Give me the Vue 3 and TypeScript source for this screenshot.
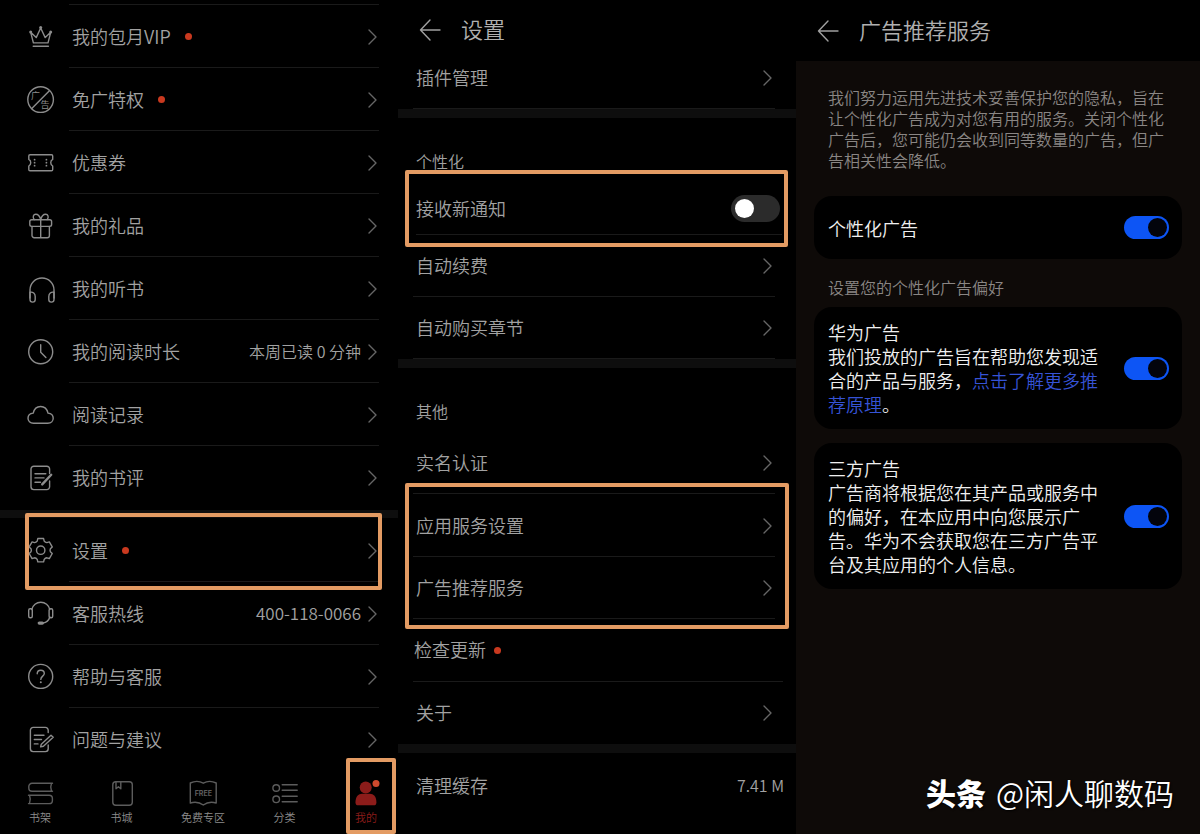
<script setup lang="ts">
import { ref } from 'vue'

interface MenuItem {
  label: string
  icon: string
  dot?: boolean
  value?: string
  phone?: boolean
  framed?: boolean
}

interface SettingItem {
  label: string
  dot?: boolean
  arrow?: boolean
  framed?: boolean
}

const mainMenu: MenuItem[] = [
  { label: '我的包月VIP', icon: 'crown', dot: true },
  { label: '免广特权', icon: 'adfree', dot: true },
  { label: '优惠券', icon: 'ticket' },
  { label: '我的礼品', icon: 'gift' },
  { label: '我的听书', icon: 'headphones' },
  { label: '我的阅读时长', icon: 'clock', value: '本周已读 0 分钟' },
  { label: '阅读记录', icon: 'cloud' },
  { label: '我的书评', icon: 'review' },
]

const serviceMenu: MenuItem[] = [
  { label: '设置', icon: 'gear', dot: true, framed: true },
  { label: '客服热线', icon: 'headset', value: '400-118-0066', phone: true },
  { label: '帮助与客服', icon: 'help' },
  { label: '问题与建议', icon: 'feedback' },
]

const menus = [mainMenu, serviceMenu]

const tabs = [
  { label: '书架', icon: 'shelf' },
  { label: '书城', icon: 'store' },
  { label: '免费专区', icon: 'free' },
  { label: '分类', icon: 'category' },
  { label: '我的', icon: 'me' },
]

const otherSettings: SettingItem[] = [
  { label: '实名认证', arrow: true },
  { label: '应用服务设置', arrow: true, framed: true },
  { label: '广告推荐服务', arrow: true },
  { label: '检查更新', dot: true },
  { label: '关于', arrow: true },
]

const notify = ref(false)
const personalAds = ref(true)
const huaweiAds = ref(true)
const thirdPartyAds = ref(true)

function gearPath(cx: number, cy: number): string {
  const parts: string[] = []
  const at = (deg: number, r: number) => {
    const a = (deg * Math.PI) / 180
    return `${(cx + r * Math.cos(a)).toFixed(2)} ${(cy + r * Math.sin(a)).toFixed(2)}`
  }
  for (let i = 0; i < 6; i++) {
    const c = i * 60 - 90
    parts.push(`${i === 0 ? 'M' : 'L'}${at(c - 21, 9.8)}`)
    parts.push(`L${at(c - 14, 12)}`)
    parts.push(`L${at(c + 14, 12)}`)
    parts.push(`L${at(c + 21, 9.8)}`)
    parts.push(`Q${at(c + 30, 9)} ${at(c + 39, 9.8)}`)
  }
  return parts.join('') + 'Z'
}
const gear = gearPath(13.7, 13.2)
</script>

<template>
  <main class="page">
    <section class="panel mine">
      <ul v-for="(menu, m) in menus" :key="m" class="menu">
        <li v-for="item in menu" :key="item.label" class="menu-item">
          <button type="button" class="menu-row">
            <svg class="icon" viewBox="0 0 28 28" aria-hidden="true">
              <template v-if="item.icon === 'crown'">
                <path d="M3.7 9.3L6.4 19.9H21L23.7 9.3L18.2 14.6L13.7 5L9.2 14.6Z" />
                <path d="M6.2 23.3H21.4" />
                <g class="solid">
                  <circle cx="3.7" cy="9" r="1.5" />
                  <circle cx="13.7" cy="4.6" r="1.5" />
                  <circle cx="23.7" cy="9" r="1.5" />
                </g>
              </template>
              <template v-else-if="item.icon === 'adfree'">
                <circle cx="13.6" cy="13.6" r="12.8" />
                <path d="M22.4 4.8L4.8 22.4" />
                <text x="4" y="13">广</text>
                <text x="13.5" y="21.5">告</text>
              </template>
              <template v-else-if="item.icon === 'ticket'">
                <path d="M3 5.7H24.5a1.2 1.2 0 0 1 1.2 1.2V10.4c-2.6 1.4-2.6 5.2 0 6.6V20.5a1.2 1.2 0 0 1-1.2 1.2H3a1.2 1.2 0 0 1-1.2-1.2V17c2.6-1.4 2.6-5.2 0-6.6V6.9A1.2 1.2 0 0 1 3 5.7Z" />
                <g class="solid">
                  <circle v-for="y in [10.7, 13.7, 16.7]" :key="y" cx="7.6" :cy="y" r="0.9" />
                  <circle v-for="y in [10.7, 13.7, 16.7]" :key="y" cx="19.4" :cy="y" r="0.9" />
                </g>
              </template>
              <template v-else-if="item.icon === 'gift'">
                <rect x="2.8" y="7.8" width="21.8" height="6.6" rx="1.8" />
                <path d="M5 14.4V23.5a2.2 2.2 0 0 0 2.2 2.2H20.2a2.2 2.2 0 0 0 2.2-2.2V14.4M13.7 7.8V25.7" />
                <path d="M13.7 7.6C12.7 3.8 10.8 2.2 8.8 2.2C6.4 2.2 5.2 5.2 7.3 7.6M13.7 7.6C14.7 3.8 16.6 2.2 18.6 2.2C21 2.2 22.2 5.2 20.1 7.6" />
              </template>
              <template v-else-if="item.icon === 'headphones'">
                <path d="M3 23V15A12 12 0 0 1 27 15V23" />
                <path d="M3 17.2C6 16.6 8.2 18.6 8.2 21.6V24.5A2.6 2.6 0 0 1 3 24.5ZM27 17.2C24 16.6 21.8 18.6 21.8 21.6V24.5A2.6 2.6 0 0 0 27 24.5Z" />
              </template>
              <template v-else-if="item.icon === 'clock'">
                <circle cx="13.7" cy="13.8" r="12" />
                <path d="M13.7 6.7V14.3L18.9 19.5" />
              </template>
              <template v-else-if="item.icon === 'cloud'">
                <path d="M6.5 22.2C3 22.2 1 19.9 1 17.2C1 14.3 3 12.4 6.2 12.1C7.2 7.7 10 5.5 13.6 5.5S20 7.7 21 12.1C24.2 12.4 26.2 14.3 26.2 17.2C26.2 19.9 24.2 22.2 20.7 22.2Z" />
              </template>
              <template v-else-if="item.icon === 'review'">
                <path d="M22.6 9.5V5A2.8 2.8 0 0 0 19.8 2.2H6.8A2.8 2.8 0 0 0 4 5V22.8A2.8 2.8 0 0 0 6.8 25.6H19.8A2.8 2.8 0 0 0 22.6 22.8V17" />
                <path d="M8 9.7H18.8M8 13.9H17M8 18.2H13.5" />
                <path class="thick" d="M24.2 10.8L15.2 20.4" />
              </template>
              <template v-else-if="item.icon === 'gear'">
                <path :d="gear" />
                <circle cx="13.7" cy="13.2" r="4.2" />
              </template>
              <template v-else-if="item.icon === 'headset'">
                <path d="M4.8 9.5A9.2 9.2 0 0 1 22.8 9.5M22.8 17C21.8 20.5 19.5 22.5 16 23" />
                <rect x="1.7" y="8.7" width="3.6" height="9" rx="1.5" />
                <rect x="22.1" y="8.7" width="3.6" height="9" rx="1.5" />
                <rect class="solid" x="10.6" y="21.4" width="6.4" height="3.4" rx="1.7" />
              </template>
              <template v-else-if="item.icon === 'help'">
                <circle cx="13.7" cy="13.4" r="12" />
                <path d="M10.2 10.8C10.2 8.6 11.7 7.2 13.8 7.2S17.3 8.6 17.3 10.6C17.3 13.1 13.8 13.3 13.8 16.4" />
                <circle class="solid" cx="13.8" cy="19.3" r="1" />
              </template>
              <template v-else>
                <path d="M21.2 6.5V4.2A2.8 2.8 0 0 0 18.4 1.4H6.2A2.8 2.8 0 0 0 3.4 4.2V22.8A2.8 2.8 0 0 0 6.2 25.6H18.4A2.8 2.8 0 0 0 21.2 22.8V19" />
                <path d="M7.3 9.2H17M7.3 13.5H14.5M7.3 17.9H11" />
                <path d="M24 9.2L26.2 11.3L16.4 20.3L13.6 20.9L14.3 18.2Z" />
              </template>
            </svg>
            <span class="menu-body">
              <span class="label">{{ item.label }}</span>
              <span v-if="item.dot" class="dot"></span>
              <span v-if="item.value" class="value" :class="{ phone: item.phone }">{{ item.value }}</span>
              <svg class="chevron" viewBox="0 0 10 16" aria-hidden="true"><path d="M1 1L8 8L1 15" /></svg>
            </span>
          </button>
          <span v-if="item.framed" class="frame frame-settings"></span>
        </li>
      </ul>

      <nav class="tabs">
        <button v-for="tab in tabs" :key="tab.label" type="button" class="tab" :class="{ active: tab.icon === 'me' }">
          <svg class="tab-icon" viewBox="0 0 28 26" aria-hidden="true">
            <template v-if="tab.icon === 'shelf'">
              <path d="M26.5 3.2H6A3.2 3.2 0 0 0 2.8 6.4V8A3.2 3.2 0 0 0 6 11.2H26.5M25.5 3.2C24.4 6 24.4 8.5 25.5 11.2" />
              <path d="M2.5 15.2H23.2A3.2 3.2 0 0 1 26.4 18.4V20.4A3.2 3.2 0 0 1 23.2 23.6H2.5M3.5 15.2C4.6 18 4.6 20.8 3.5 23.6" />
            </template>
            <template v-else-if="tab.icon === 'store'">
              <rect x="4.8" y="1.7" width="19.5" height="23.6" rx="3" />
              <path d="M8 1.7V8.7L10.4 6.7L12.8 8.7V1.7" />
            </template>
            <template v-else-if="tab.icon === 'free'">
              <path d="M1.3 3C5.5 1 10.5 1 14.3 3.2C18.1 1 23 1 27.2 3V23C23 21.8 18.1 22.2 14.3 25C10.5 22.2 5.5 21.8 1.3 23Z" />
              <text x="14.3" y="15.5">FREE</text>
            </template>
            <template v-else-if="tab.icon === 'category'">
              <circle cx="5.2" cy="8" r="3.3" />
              <circle cx="5.2" cy="19.3" r="3.3" />
              <path d="M11.2 4.7H26.2M11.2 10.3H26.2M11.2 16.3H26.2M11.2 21.7H26.2" />
            </template>
            <template v-else>
              <circle class="person" cx="13.7" cy="7.4" r="6" />
              <path class="person" d="M3.5 22.5C3.5 16.5 6.5 13.8 10 13.8H17.8C21.5 13.8 24.4 16.5 24.4 22.5C24.4 24.5 23.4 25.3 21.8 25.3H6.1C4.5 25.3 3.5 24.5 3.5 22.5Z" />
              <circle class="badge" cx="24" cy="3.4" r="3.5" />
            </template>
          </svg>
          <span>{{ tab.label }}</span>
          <span v-if="tab.icon === 'me'" class="frame frame-tab"></span>
        </button>
      </nav>
    </section>

    <section class="panel settings">
      <header class="bar">
        <button type="button" class="back" aria-label="返回">
          <svg viewBox="0 0 22 22" aria-hidden="true"><path d="M11 1L1.5 11L11 21M1.5 11H21" /></svg>
        </button>
        <h1>设置</h1>
      </header>
      <button type="button" class="set-row first">
        <span class="label">插件管理</span>
        <svg class="chevron" viewBox="0 0 10 16" aria-hidden="true"><path d="M1 1L8 8L1 15" /></svg>
      </button>

      <div class="group">
        <h2>个性化</h2>
        <div class="set-row notify">
          <label class="label" for="notify">接收新通知</label>
          <input id="notify" v-model="notify" type="checkbox" role="switch" class="switch-off" />
          <span class="frame frame-notify"></span>
        </div>
        <button v-for="name in ['自动续费', '自动购买章节']" :key="name" type="button" class="set-row">
          <span class="label">{{ name }}</span>
          <svg class="chevron" viewBox="0 0 10 16" aria-hidden="true"><path d="M1 1L8 8L1 15" /></svg>
        </button>
      </div>

      <div class="group">
        <h2>其他</h2>
        <ul class="rows">
          <li v-for="item in otherSettings" :key="item.label">
            <button type="button" class="set-row" :class="{ wide: item.dot }">
              <span class="label">{{ item.label }}</span>
              <span v-if="item.dot" class="dot"></span>
              <svg v-if="item.arrow" class="chevron" viewBox="0 0 10 16" aria-hidden="true"><path d="M1 1L8 8L1 15" /></svg>
            </button>
            <span v-if="item.framed" class="frame frame-services"></span>
          </li>
        </ul>
      </div>

      <div class="group">
        <button type="button" class="set-row cache">
          <span class="label">清理缓存</span>
          <span class="value">7.41 M</span>
        </button>
      </div>
    </section>

    <section class="panel ads">
      <header class="bar">
        <button type="button" class="back" aria-label="返回">
          <svg viewBox="0 0 22 22" aria-hidden="true"><path d="M11 1L1.5 11L11 21M1.5 11H21" /></svg>
        </button>
        <h1>广告推荐服务</h1>
      </header>
      <p class="note">我们努力运用先进技术妥善保护您的隐私，旨在让个性化广告成为对您有用的服务。关闭个性化广告后，您可能仍会收到同等数量的广告，但广告相关性会降低。</p>
      <div class="card">
        <label class="card-text" for="personal">个性化广告</label>
        <input id="personal" v-model="personalAds" type="checkbox" role="switch" class="switch" />
      </div>
      <p class="caption">设置您的个性化广告偏好</p>
      <div class="card">
        <div class="card-text">
          <label for="huawei">华为广告</label>
          <p>我们投放的广告旨在帮助您发现适合的产品与服务，<a href="#">点击了解更多推荐原理</a>。</p>
        </div>
        <input id="huawei" v-model="huaweiAds" type="checkbox" role="switch" class="switch" />
      </div>
      <div class="card">
        <div class="card-text">
          <label for="third">三方广告</label>
          <p>广告商将根据您在其产品或服务中的偏好，在本应用中向您展示广告。华为不会获取您在三方广告平台及其应用的个人信息。</p>
        </div>
        <input id="third" v-model="thirdPartyAds" type="checkbox" role="switch" class="switch" />
      </div>
      <p class="credit"><b>头条</b><span>@闲人聊数码</span></p>
    </section>
  </main>
</template>

<style>
body {
  margin: 0;
  background: #000;
}
</style>

<style scoped>
.page {
  display: grid;
  grid-template-columns: 398fr 398fr 404fr;
  min-height: 100vh;
  background: #000;
  color: #a2a2a2;
  font-family: "Noto Sans CJK SC", sans-serif;
  font-size: 18px;
  font-weight: 350;
  line-height: 24px;
}

.panel {
  min-width: 0;
  position: relative;
}

ul {
  list-style: none;
  margin: 0;
  padding: 0;
}

h1,
h2,
p {
  margin: 0;
  font-weight: inherit;
}

button {
  display: flex;
  align-items: center;
  box-sizing: border-box;
  width: 100%;
  margin: 0;
  padding: 0;
  border: 0;
  background: none;
  color: inherit;
  font: inherit;
  text-align: left;
  cursor: pointer;
}

svg {
  flex: none;
  overflow: visible;
  fill: none;
  stroke: #8c8c8c;
  stroke-width: 1.4;
  stroke-linecap: round;
  stroke-linejoin: round;
}

.frame {
  position: absolute;
  box-sizing: border-box;
  border: 4px solid #e39b63;
  border-radius: 2px;
  pointer-events: none;
}

.label,
.value {
  padding-bottom: 2px;
}

.dot {
  flex: none;
  width: 7px;
  height: 7px;
  margin-left: 14px;
  border-radius: 50%;
  background: #c9391f;
}

.value {
  margin-left: auto;
  font-size: 16px;
}

.chevron {
  width: 10px;
  height: 16px;
  margin-left: auto;
  stroke: #666;
}

.value + .chevron {
  margin-left: 7px;
}

/* Profile menu */
.mine {
  display: flex;
  flex-direction: column;
}

.menu:first-child::before {
  content: "";
  display: block;
  height: 4px;
  margin: 0 19px 0 69px;
  border-bottom: 1px solid #1a1a1a;
}

.menu + .menu {
  margin-top: 1px;
  padding-top: 9px;
  background: linear-gradient(#0e0e0e, #0e0e0e) top / 100% 8px no-repeat;
}

.menu-item {
  position: relative;
}

.menu-row {
  height: 63px;
  padding: 0 19px 0 27px;
}

.icon {
  width: 28px;
  height: 28px;
  margin: 1px 14px 0 0;
}

.icon text {
  fill: #8c8c8c;
  stroke: none;
  font-size: 9px;
  font-weight: 400;
}

.icon .solid {
  fill: #8c8c8c;
  stroke: none;
}

.icon .thick {
  stroke-width: 2.4;
}

.menu-body {
  display: flex;
  flex: 1;
  align-items: center;
  box-sizing: border-box;
  height: 63px;
  padding: 1px 1px 0 3px;
  border-bottom: 1px solid #1a1a1a;
}

.menu-item:last-child .menu-body {
  border-bottom-color: transparent;
}

.phone {
  font-size: 17px;
}

.frame-settings {
  inset: -6px 16px -8px 25px;
}

.tabs {
  display: flex;
  justify-content: space-between;
  padding: 9px 8px 9px 16px;
}

.tab {
  position: relative;
  flex-direction: column;
  gap: 3px;
  width: 48px;
  color: #8c8c8c;
  font-size: 11px;
  line-height: 16px;
  white-space: nowrap;
}

.tab-icon {
  width: 28px;
  height: 26px;
  stroke: #5c5c5c;
}

.tab-icon text {
  fill: #5c5c5c;
  stroke: none;
  font-family: Inter, sans-serif;
  font-size: 7px;
  font-weight: 700;
  text-anchor: middle;
}

.tab-icon .person {
  fill: #8c1c1a;
  stroke: none;
}

.tab-icon .badge {
  fill: #d04a2e;
  stroke: none;
}

.active {
  color: #8c1c1a;
}

.frame-tab {
  inset: -22px -6px -9px 4px;
}

/* Header bars */
.bar {
  display: flex;
  align-items: center;
  gap: 20px;
  box-sizing: border-box;
  padding: 0 21px;
  color: #b0b0b0;
}

.bar h1 {
  padding-bottom: 4px;
  font-size: 22px;
  line-height: 28px;
}

.back {
  width: 22px;
  height: 22px;
}

.back svg {
  width: 22px;
  height: 22px;
  stroke: #a0a0a0;
}

/* Settings */
.settings .bar {
  height: 46px;
  padding-top: 14px;
}

.set-row {
  position: relative;
  display: flex;
  align-items: center;
  box-sizing: border-box;
  height: 62px;
  padding: 0 23px 0 18px;
}

.set-row::after {
  content: "";
  position: absolute;
  inset: auto 21px 0 15px;
  height: 1px;
  background: #1a1a1a;
}

.set-row.first {
  height: 63px;
}

.group {
  border-top: 9px solid #0e0e0e;
}

.group h2 {
  padding: 31px 18px 9px;
  font-size: 16px;
}

.notify {
  height: 53px;
  padding-right: 16px;
}

.notify::after {
  right: 14px;
  left: 18px;
}

.frame-notify {
  inset: -12px 8px -12px 7px;
}

.rows {
  display: grid;
  grid-auto-rows: 1fr;
  height: 312px;
}

.rows li {
  position: relative;
}

.rows .set-row {
  height: 100%;
}

.rows li:last-child .set-row::after,
.cache::after {
  display: none;
}

.rows .wide {
  padding-left: 16px;
}

.wide::after {
  right: 13px;
}

.wide .dot {
  margin-left: 8px;
}

.frame-services {
  top: -11px;
  right: 7px;
  left: 7px;
  z-index: 1;
  height: calc(200% + 21px);
}

.cache {
  height: 66px;
  padding-right: 12px;
}

.switch-off,
.switch {
  appearance: none;
  flex: none;
  display: flex;
  align-items: center;
  box-sizing: border-box;
  margin: 0 0 0 auto;
  cursor: pointer;
}

.switch-off {
  width: 49px;
  height: 27px;
  padding: 0 4px;
  border-radius: 14px;
  background: #2b2b2b;
}

.switch-off::before {
  content: "";
  width: 19px;
  height: 19px;
  border-radius: 50%;
  background: #fff;
}

.switch-off:checked {
  justify-content: flex-end;
}

/* Ad recommendation service */
.ads {
  background: #0e0a08;
}

.ads .bar {
  height: 61px;
  background: #000;
}

.note {
  padding: 26px 28px 25px 32px;
  color: #8a8684;
  font-size: 16px;
  line-height: 21px;
}

.card {
  display: flex;
  align-items: center;
  justify-content: space-between;
  gap: 16px;
  box-sizing: border-box;
  min-height: 63px;
  margin: 0 18px 14px;
  padding: 13px 13px 13px 14px;
  border-radius: 18px;
  background: #000;
  color: #f0f0f0;
}

.card-text {
  max-width: 280px;
}

.caption {
  padding: 2px 32px 8px;
  color: #8a8684;
  font-size: 16px;
}

.card a {
  color: #3653d6;
  text-decoration: none;
}

.switch {
  width: 45px;
  height: 23px;
  padding: 0 2px;
  border-radius: 12px;
  background: #0d55f5;
}

.switch::before {
  content: "";
  width: 19px;
  height: 19px;
  border-radius: 50%;
  background: #03040c;
}

.switch:checked {
  justify-content: flex-end;
}

.credit {
  position: absolute;
  right: 26px;
  bottom: 24px;
  display: flex;
  gap: 10px;
  color: #fff;
  font-size: 30px;
  line-height: 36px;
  white-space: nowrap;
  text-shadow: 1px 1px 2px #000;
}

.credit b {
  font-weight: 900;
}
</style>
